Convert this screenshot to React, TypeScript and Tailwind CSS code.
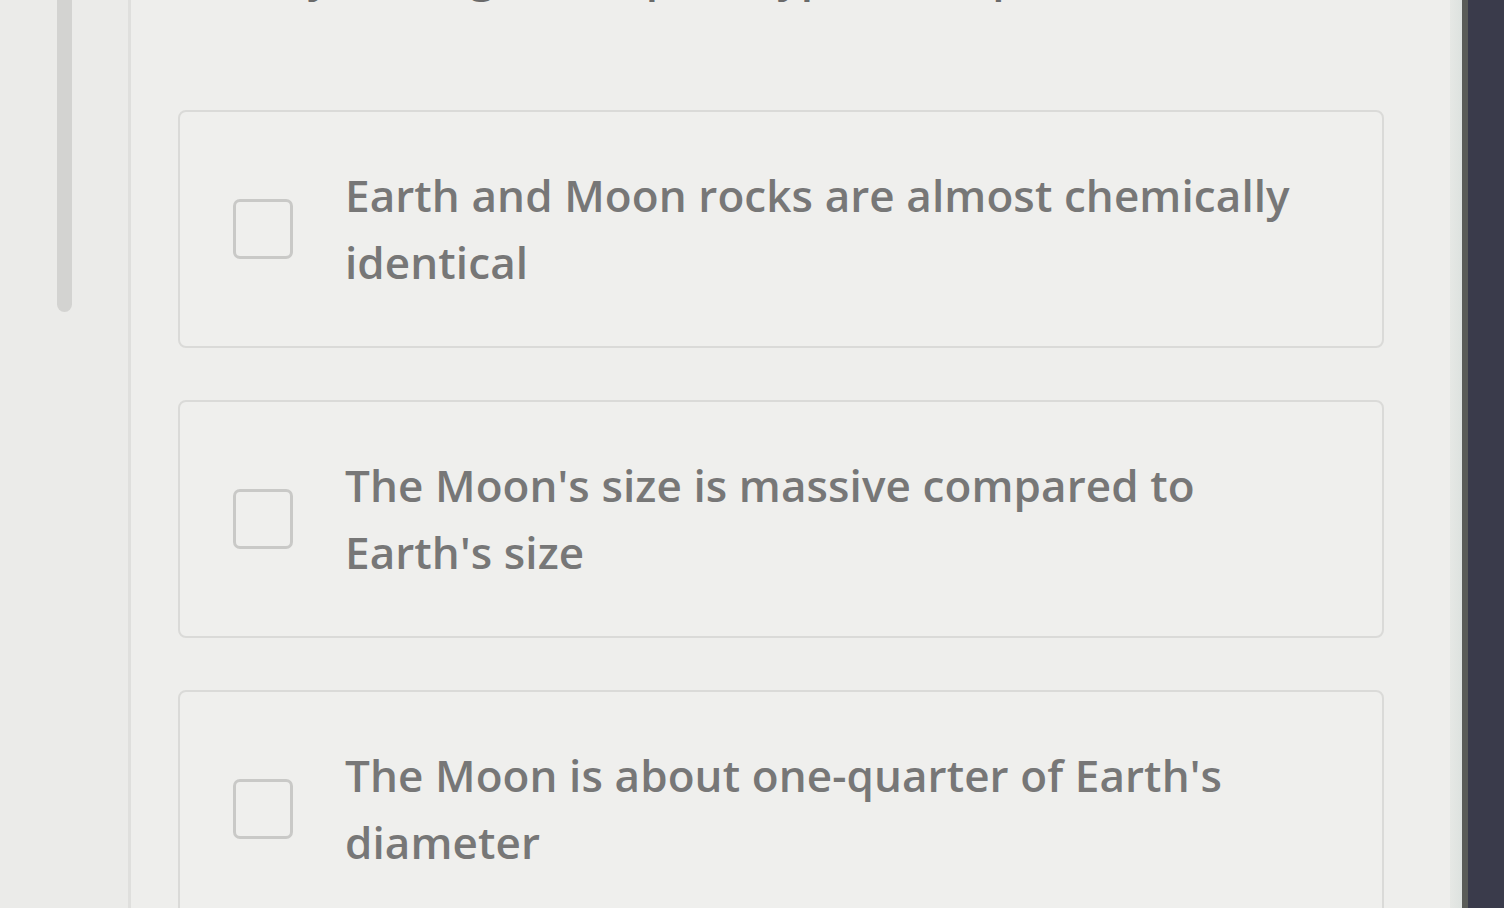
const options = [
  "Earth and Moon rocks are almost chemically identical",
  "The Moon's size is massive compared to Earth's size",
  "The Moon is about one-quarter of Earth's diameter",
];

function OptionCard({ label }: { label: string }) {
  return (
    <div className="flex h-[238px] shrink-0 items-center rounded-[8px] border-2 border-[#dadad8] bg-[#efefed] pl-[53px]">
      <div className="h-[60px] w-[60px] shrink-0 rounded-[7px] border-[3px] border-[#c9c9c7]" />
      <p className="ml-[52px] w-[970px] shrink-0 text-[44px] font-semibold leading-[67px] tracking-[0.1px] text-[#777777]">
        {label}
      </p>
    </div>
  );
}

export default function App() {
  return (
    <div
      className="flex h-[908px] w-[1504px] overflow-hidden bg-[#ebebe9]"
      style={{ fontFamily: '"Open Sans", "Noto Sans", sans-serif' }}
    >
      {/* scroll rail */}
      <div className="w-[128px] shrink-0 pl-[57px]">
        <div className="h-[312px] w-[15px] rounded-b-full bg-[#d3d3d1]" />
      </div>

      <main className="flex min-w-0 flex-1 flex-col overflow-hidden border-l-[3px] border-[#dfdfdd] bg-[#eeeeec] pl-[47px] pr-[66px]">
        <p className="-mt-[50px] h-[50px] shrink-0 pl-[60px] text-[44px] font-semibold leading-[50px] text-[#6a6a6a]">
          Why is the giant-impact hypothesis plausible?
        </p>
        <div className="mt-[110px] flex flex-col gap-[52px]">
          {options.map((o) => (
            <OptionCard key={o} label={o} />
          ))}
        </div>
      </main>

      {/* screen bezel */}
      <div className="w-[12px] shrink-0 bg-gradient-to-r from-[#e6e8e5] to-[#dde2df]" />
      <div className="w-[6px] shrink-0 bg-[#5a5c58]" />
      <div className="w-[36px] shrink-0 bg-[#3a3b4b]" />
    </div>
  );
}
